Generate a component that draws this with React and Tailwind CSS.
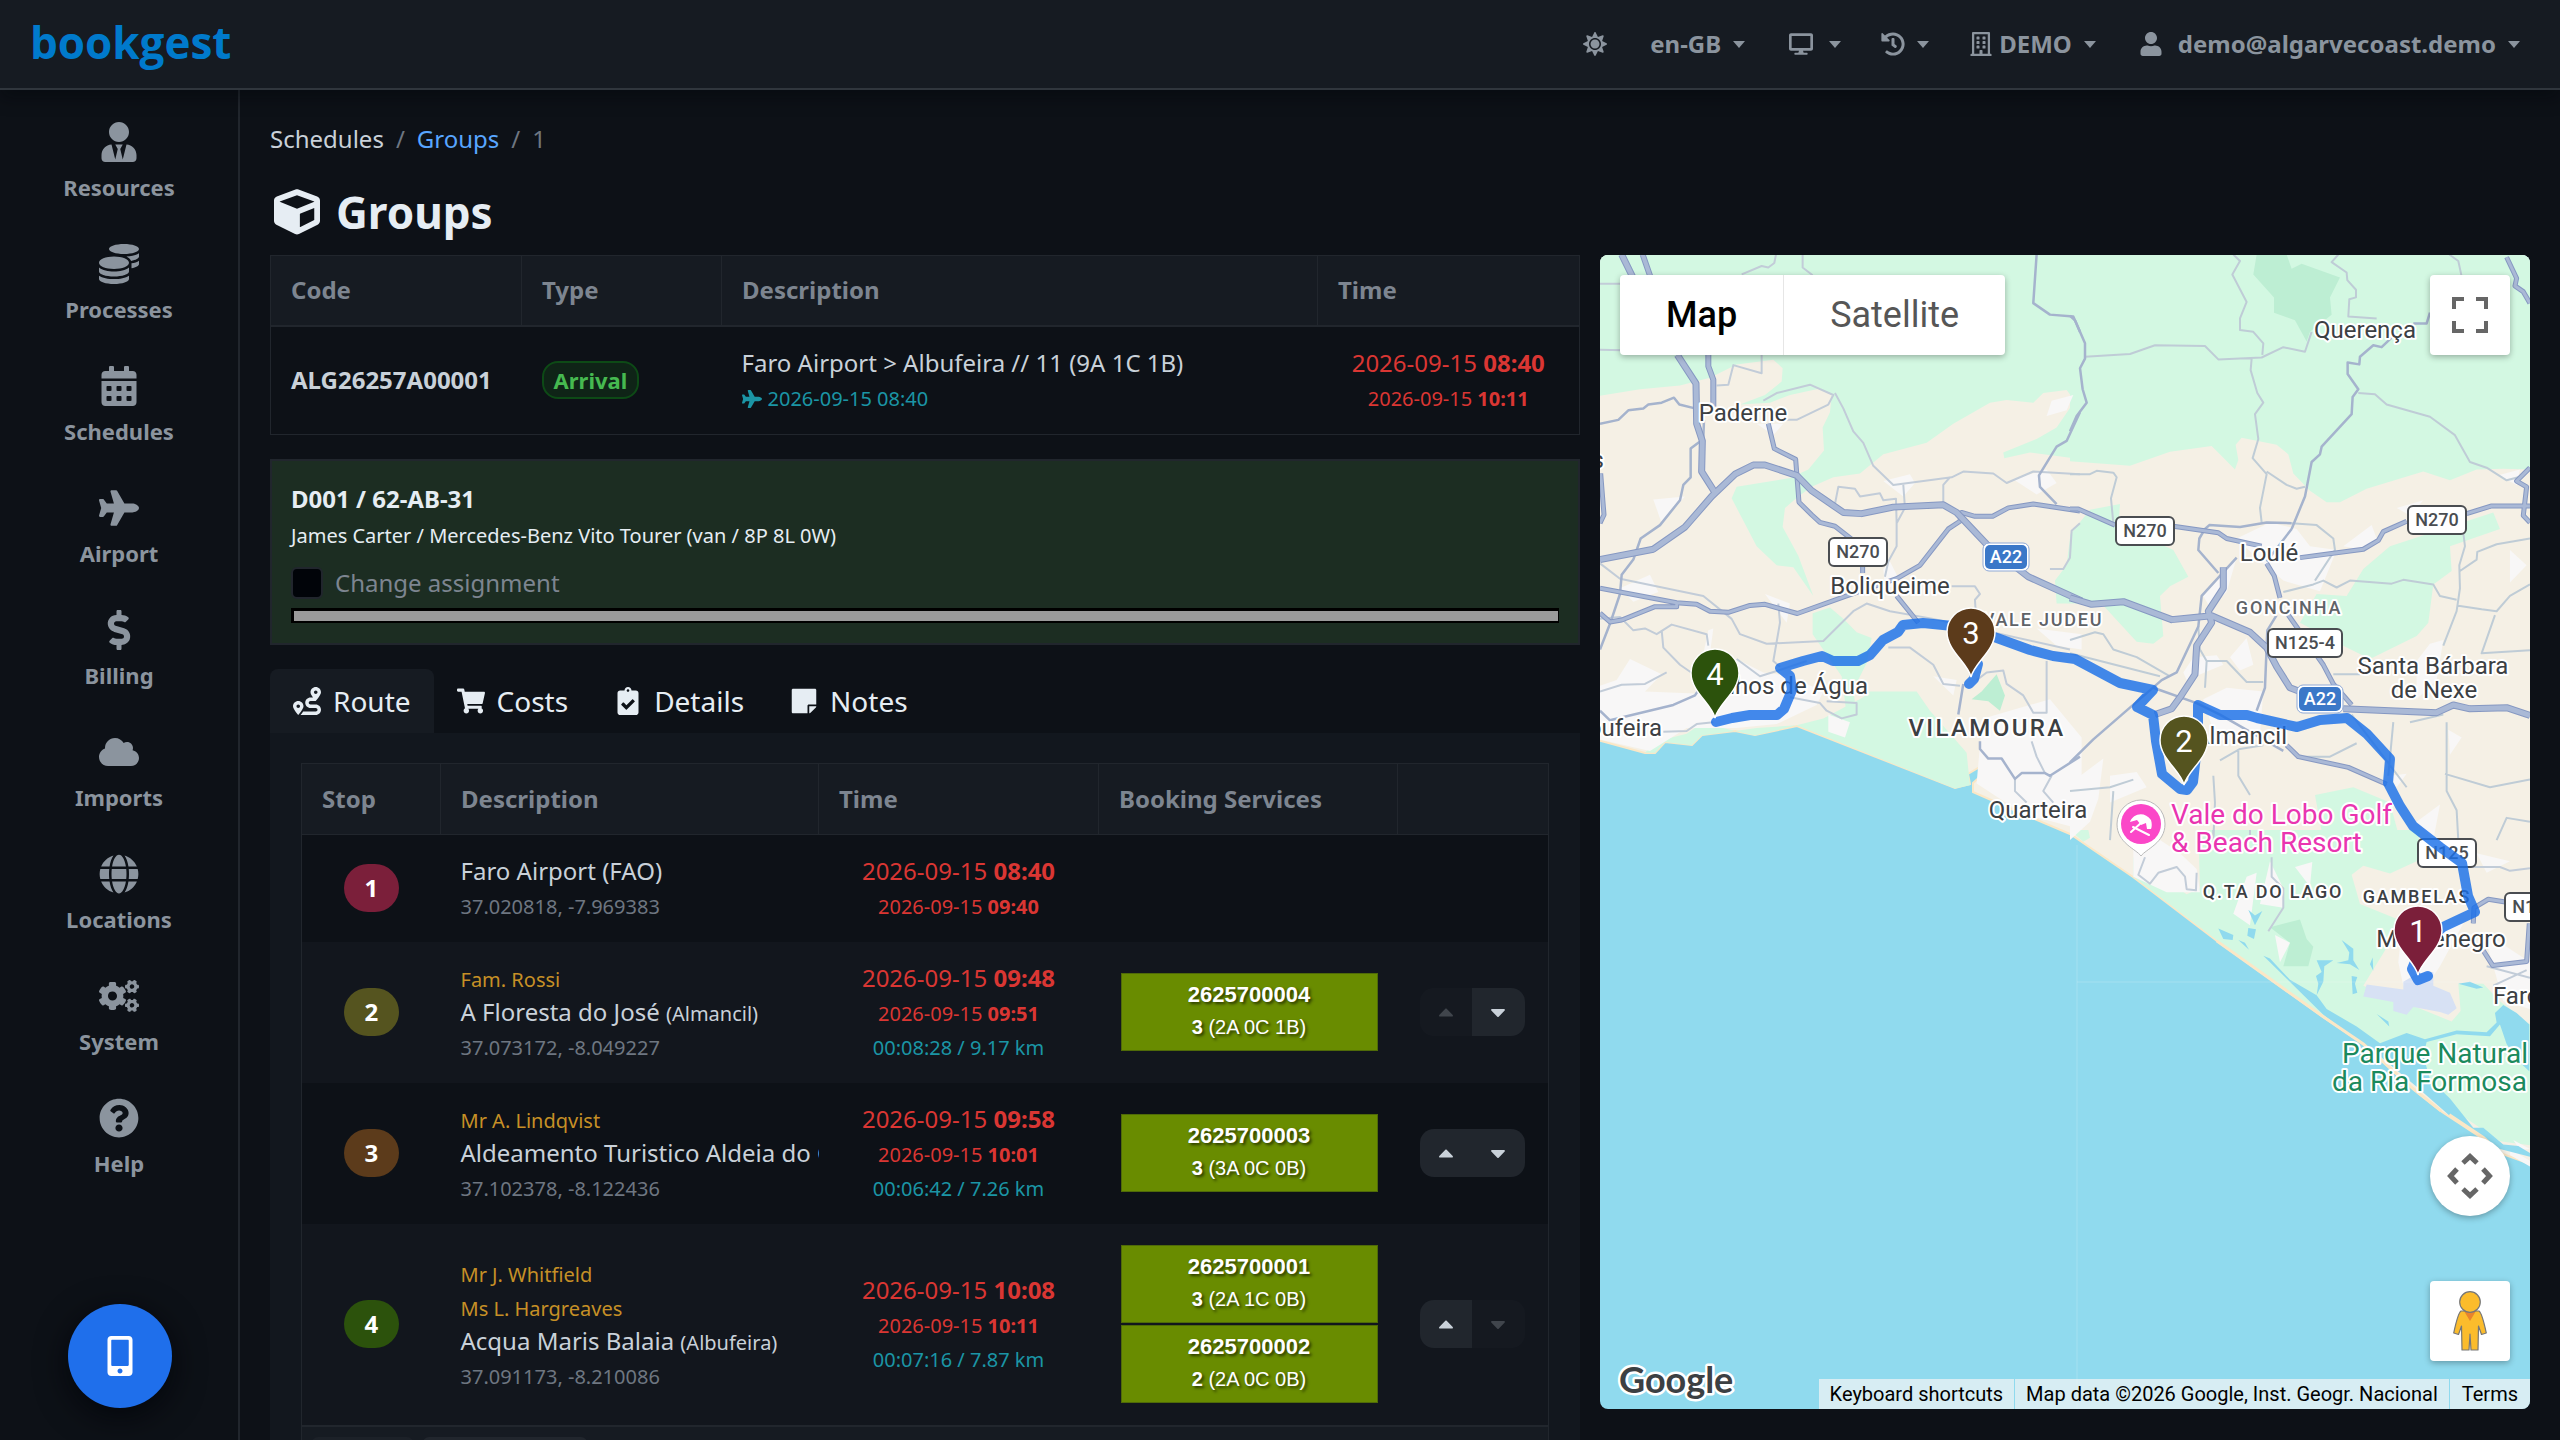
import React from "react";
import {
  FaRegBuilding,
  FaCalendarAlt,
  FaCaretDown,
  FaCaretUp,
  FaClipboardCheck,
  FaCloud,
  FaCogs,
  FaCoins,
  FaCube,
  FaDesktop,
  FaDollarSign,
  FaGlobe,
  FaHistory,
  FaMobileAlt,
  FaPlane,
  FaQuestionCircle,
  FaRoute,
  FaShoppingCart,
  FaStickyNote,
  FaSun,
  FaUser,
  FaUserTie,
} from "react-icons/fa";

const NAV = [
  { label: "Resources", icon: FaUserTie },
  { label: "Processes", icon: FaCoins },
  { label: "Schedules", icon: FaCalendarAlt },
  { label: "Airport", icon: FaPlane },
  { label: "Billing", icon: FaDollarSign },
  { label: "Imports", icon: FaCloud },
  { label: "Locations", icon: FaGlobe },
  { label: "System", icon: FaCogs },
  { label: "Help", icon: FaQuestionCircle },
];

const TABS = [
  { label: "Route", icon: FaRoute, active: true },
  { label: "Costs", icon: FaShoppingCart },
  { label: "Details", icon: FaClipboardCheck },
  { label: "Notes", icon: FaStickyNote },
];

const STOPS = [
  {
    stop: 1,
    badge: "bg-[#7b1f3a]",
    row: "h-[107px] bg-[#0d1117]",
    guests: [],
    name: "Faro Airport (FAO)",
    coords: "37.020818, -7.969383",
    from: "08:40",
    to: "09:40",
    services: [],
  },
  {
    stop: 2,
    badge: "bg-[#55541f]",
    row: "h-[141px] bg-[#12161d]",
    guests: ["Fam. Rossi"],
    name: "A Floresta do José",
    area: "(Almancil)",
    coords: "37.073172, -8.049227",
    from: "09:48",
    to: "09:51",
    leg: "00:08:28 / 9.17 km",
    services: [{ code: "2625700004", pax: "3", split: "(2A 0C 1B)" }],
    down: true,
  },
  {
    stop: 3,
    badge: "bg-[#5c3b1b]",
    row: "h-[141px] bg-[#0d1117]",
    guests: ["Mr A. Lindqvist"],
    name: "Aldeamento Turistico Aldeia do Golfe",
    area: "(Vilamoura)",
    coords: "37.102378, -8.122436",
    from: "09:58",
    to: "10:01",
    leg: "00:06:42 / 7.26 km",
    services: [{ code: "2625700003", pax: "3", split: "(3A 0C 0B)" }],
    up: true,
    down: true,
  },
  {
    stop: 4,
    badge: "bg-[#2c520c]",
    row: "h-[202px] bg-[#12161d]",
    guests: ["Mr J. Whitfield", "Ms L. Hargreaves"],
    name: "Acqua Maris Balaia",
    area: "(Albufeira)",
    coords: "37.091173, -8.210086",
    from: "10:08",
    to: "10:11",
    leg: "00:07:16 / 7.87 km",
    services: [
      { code: "2625700001", pax: "3", split: "(2A 1C 0B)" },
      { code: "2625700002", pax: "2", split: "(2A 0C 0B)" },
    ],
    up: true,
  },
];

function Caret() {
  return <span className="ml-3 border-x-[6px] border-t-[7px] border-x-transparent border-t-current" />;
}

function HeaderButton({ label, children, caret = true }) {
  return (
    <button type="button" aria-label={label} className="flex items-center">
      {children}
      {caret && <Caret />}
    </button>
  );
}

function Header() {
  return (
    <header className="relative z-10 flex h-[90px] shrink-0 items-center justify-between border-b-2 border-[#30363d] bg-[#161b22] pr-10 pl-[30px] shadow-[0_8px_16px_rgba(1,4,9,0.4)]">
      <a href="#" className="pb-1 font-['Open_Sans',sans-serif] text-[44px] leading-none font-bold text-[#007acc]">
        bookgest
      </a>
      <nav className="flex items-center gap-10 font-bold text-[#8b949e]">
        <HeaderButton label="Theme" caret={false}>
          <span className="flex w-[30px] justify-center"><FaSun /></span>
        </HeaderButton>
        <HeaderButton>en-GB</HeaderButton>
        <HeaderButton label="Display">
          <span className="flex w-8 justify-center"><FaDesktop /></span>
        </HeaderButton>
        <HeaderButton label="History"><FaHistory /></HeaderButton>
        <HeaderButton>
          <FaRegBuilding className="mr-1.5" />
          DEMO
        </HeaderButton>
        <HeaderButton>
          <span className="mr-3 flex w-[30px] justify-center"><FaUser /></span>
          demo@algarvecoast.demo
        </HeaderButton>
      </nav>
    </header>
  );
}

function Sidebar() {
  return (
    <aside className="w-60 shrink-0 border-r-2 border-[#21262d]">
      <ul className="flex flex-col gap-[41px] pt-8">
        {NAV.map(({ label, icon: Icon }) => (
          <li key={label}>
            <a href="#" className="flex flex-col items-center gap-[9px] text-[22px] leading-8 font-bold text-[#8b949e]">
              <Icon className="text-[40px]" />
              {label}
            </a>
          </li>
        ))}
      </ul>
      <button
        type="button"
        aria-label="Mobile app"
        className="fixed bottom-8 left-[68px] flex size-[104px] items-center justify-center rounded-full bg-[#1f6feb] text-[40px] text-white shadow-[0_8px_32px_rgba(1,4,9,0.8)]"
      >
        <FaMobileAlt />
      </button>
    </aside>
  );
}

function Times({ from, to, leg }) {
  return (
    <div className="text-center text-[#da3633]">
      2026-09-15 <b>{from}</b>
      <br />
      <small className="text-[20px] leading-none">
        2026-09-15 <b>{to}</b>
      </small>
      {leg && (
        <>
          <br />
          <small className="text-[20px] leading-none text-[#1b95a5]">{leg}</small>
        </>
      )}
    </div>
  );
}

function GroupTable() {
  return (
    <table className="w-full table-fixed border-collapse border border-[#21262d] leading-[34px]">
      <thead className="bg-[#161b22] text-left text-[#7d8590]">
        <tr className="h-[70px] border-b-2 border-[#21262d]">
          <th className="w-[251px] border-r border-[#21262d] px-5">Code</th>
          <th className="w-[200px] border-r border-[#21262d] px-5">Type</th>
          <th className="border-r border-[#21262d] px-5">Description</th>
          <th className="w-[262px] px-5">Time</th>
        </tr>
      </thead>
      <tbody>
        <tr className="h-[109px]">
          <td className="px-5 font-bold">ALG26257A00001</td>
          <td className="px-5">
            <span className="inline-block rounded-2xl border-2 border-[#0d4a16] bg-[#0f2417] px-2.5 text-[22px] font-bold text-[#46b950]">
              Arrival
            </span>
          </td>
          <td className="px-5">
            Faro Airport &gt; Albufeira // 11 (9A 1C 1B)
            <br />
            <small className="text-[20px] leading-none text-[#1b95a5]">
              <FaPlane className="mr-1.5 inline align-[-3px]" />
              2026-09-15 08:40
            </small>
          </td>
          <td>
            <Times from="08:40" to="10:11" />
          </td>
        </tr>
      </tbody>
    </table>
  );
}

function Assignment() {
  return (
    <section className="mt-6 flex flex-col border-2 border-[#21262d] bg-[#1c2d22] px-[19px] pt-5 pb-5 text-[#e6edf3]">
      <strong className="leading-9">D001 / 62-AB-31</strong>
      <span className="text-[20px] leading-[38px]">James Carter / Mercedes-Benz Vito Tourer (van / 8P 8L 0W)</span>
      <label className="mt-2 flex items-center gap-3 leading-10 text-[#7d8590]">
        <input
          type="checkbox"
          className="size-8 appearance-none rounded-md border-2 border-[#21262d] bg-[#010409] checked:bg-[#1f6feb]"
        />
        Change assignment
      </label>
      <hr className="mt-[5px] h-[15px] border-t-3 border-r border-b-2 border-l-3 border-black bg-[#9a9a9a]" />
    </section>
  );
}

function Service({ code, pax, split }) {
  return (
    <div className="border border-[#4f6a08] bg-[#698c00] pt-[5px] pb-[7px] text-center font-['Liberation_Sans',Arial,sans-serif] text-[20px] leading-8 text-white text-shadow-[2px_2px_3px_rgba(0,0,0,0.6)]">
      <b className="block text-[22px]">{code}</b>
      <b>{pax}</b> {split}
    </div>
  );
}

function MoveButtons({ up, down }) {
  return (
    <div className="flex h-12 w-[105px] overflow-hidden rounded-[14px] text-[24px] text-[#c9d1d9]">
      <button type="button" aria-label="Move up" disabled={!up} className="flex flex-1 items-center justify-center bg-[#21262d] disabled:opacity-25">
        <FaCaretUp />
      </button>
      <button type="button" aria-label="Move down" disabled={!down} className="flex flex-1 items-center justify-center bg-[#21262d] disabled:opacity-25">
        <FaCaretDown />
      </button>
    </div>
  );
}

function StopsTable() {
  return (
    <table className="w-full table-fixed border-collapse border border-[#21262d] leading-[34px]">
      <thead className="bg-[#161b22] text-left text-[#7d8590]">
        <tr className="h-[71px] border-b border-[#21262d]">
          <th className="w-[139px] border-r border-[#21262d] px-5">Stop</th>
          <th className="border-r border-[#21262d] px-5">Description</th>
          <th className="w-[280px] border-r border-[#21262d] px-5">Time</th>
          <th className="w-[299px] border-r border-[#21262d] px-5">Booking Services</th>
          <th className="w-[151px]" aria-label="Order" />
        </tr>
      </thead>
      <tbody>
        {STOPS.map((s) => (
          <tr key={s.stop} className={s.row}>
            <td>
              <span className={`mx-auto flex h-12 w-[55px] items-center justify-center rounded-full font-bold text-white ${s.badge}`}>
                {s.stop}
              </span>
            </td>
            <td className="overflow-hidden pl-5 whitespace-nowrap">
              {s.guests.map((guest) => (
                <React.Fragment key={guest}>
                  <small className="text-[20px] leading-none text-[#c69026]">{guest}</small>
                  <br />
                </React.Fragment>
              ))}
              {s.name} {s.area && <small className="text-[20px] leading-none">{s.area}</small>}
              <br />
              <small className="text-[20px] leading-none text-[#6e7681]">{s.coords}</small>
            </td>
            <td>
              <Times from={s.from} to={s.to} leg={s.leg} />
            </td>
            <td className="pr-5 pl-[22px]">
              <div className="flex flex-col gap-0.5">
                {s.services.map((service) => (
                  <Service key={service.code} {...service} />
                ))}
              </div>
            </td>
            <td className="pl-[22px]">{s.stop > 1 && <MoveButtons up={s.up} down={s.down} />}</td>
          </tr>
        ))}
      </tbody>
      <tfoot className="border-t-2 border-[#21262d] bg-[#161b22]">
        <tr>
          <td colSpan={5} className="px-2.5 pt-2.5 pb-5">
            <div className="flex gap-2.5">
              <button type="button" aria-label="Save order" className="h-12 w-[101px] rounded-md bg-[#1c2128]" />
              <button type="button" aria-label="Recalculate" className="h-12 w-[164px] rounded-md bg-[#21262d]" />
            </div>
          </td>
        </tr>
      </tfoot>
    </table>
  );
}

/* ---------- Map ---------- */

const PLACES = [
  { text: "Paderne", x: 143, y: 166 },
  { text: "Boliqueime", x: 290, y: 339 },
  { text: "Olhos de Água", x: 268, y: 439, anchor: "end" },
  { text: "Albufeira", x: 62, y: 481, anchor: "end" },
  { text: "Messines", x: 4, y: 213, anchor: "end" },
  { text: "Quarteira", x: 438, y: 563 },
  { text: "Querença", x: 765, y: 83 },
  { text: "Loulé", x: 669, y: 306 },
  { text: "Santa Bárbara", x: 833, y: 419 },
  { text: "de Nexe", x: 834, y: 443 },
  { text: "Almancil", x: 687, y: 489, anchor: "end" },
  { text: "Montenegro", x: 841, y: 692 },
  { text: "Faro", x: 893, y: 749, anchor: "start" },
];

const DISTRICTS = [
  { text: "VALE JUDEU", x: 443, y: 371, size: 18, fill: "#5f6368" },
  { text: "VILAMOURA", x: 387, y: 481, size: 24, fill: "#3c4043" },
  { text: "GONCINHA", x: 689, y: 359, size: 18, fill: "#5f6368" },
  { text: "Q.TA DO LAGO", x: 673, y: 643, size: 18, fill: "#3c4043" },
  { text: "GAMBELAS", x: 817, y: 648, size: 18, fill: "#3c4043" },
];

const SHIELDS = [
  { text: "N270", x: 258, y: 297, w: 58 },
  { text: "N270", x: 545, y: 276, w: 58 },
  { text: "N270", x: 837, y: 265, w: 58 },
  { text: "N125-4", x: 705, y: 388, w: 74 },
  { text: "N125", x: 847, y: 598, w: 58 },
  { text: "N125", x: 934, y: 652, w: 58 },
  { text: "A22", x: 406, y: 302, w: 42, motorway: true },
  { text: "A22", x: 720, y: 444, w: 42, motorway: true },
];

const PINS = [
  { n: 4, x: 115, y: 463, fill: "#2c520c" },
  { n: 3, x: 371, y: 422, fill: "#5c3b1b" },
  { n: 2, x: 584, y: 530, fill: "#55541f" },
  { n: 1, x: 818, y: 720, fill: "#7b1f3a" },
];

// Each tile is drawn on its own 1470-unit wide grid and placed on the map.
const WEST = "translate(-10 -15) scale(.3333 .3827)";
const EAST = "translate(470 -15) scale(.3333 .3827)";
const SOUTH = "translate(470 575) scale(.3333 .3891)";

const MINOR_WEST =
  "M30 114H100M30 287L200 290M455 90L515 68L535 72L553 60L558 38M638 38V72L668 92M380 380L415 378L430 327L515 348V300M520 420L560 400L660 378L730 405L715 430L620 470H590M735 400L760 440L790 500L820 530L850 590L910 640L1085 620L1120 605L1210 610L1250 635L1330 605L1470 612M745 700L735 690L745 645L795 650L810 670L870 662L880 680L918 676L920 740M940 640L945 700L920 740V800L895 840L885 880M30 845L90 885L340 930L425 990L450 1030L530 1055L700 1048L790 970L830 950L900 970L1030 990L1440 1070M30 990L90 985L130 1020L165 1015L200 1030L245 1005L350 1030L355 1060M215 1020L220 1065L270 1110L320 1140M30 1180L95 1162L165 1160L230 1130M220 1285L290 1283L320 1265L370 1260M565 950L570 1000L550 1100L570 1115M440 1095L510 1140L565 1125L650 1100M895 1065H960L1030 1110L1060 1160L1110 1165M1160 1150L1190 1130L1240 1125L1250 1160L1300 1190L1330 1235H1370V1100M1325 1310L1340 1350L1365 1393M1275 1408V1440L1310 1470M1385 1400L1360 1440L1390 1470M1080 620L1060 640V690M1085 905L1155 905L1170 925L1155 940L1160 1010M1470 740L1445 760L1440 830L1420 860H1380M600 1195L690 1210L710 1230L755 1250L800 1240V1210L710 1205";

const MINOR_EAST =
  "M490 38L510 55L487 90L530 162L510 205V235L550 240L580 270L577 300M45 305L180 298L255 275L405 277L445 312L575 307L640 280L705 292L725 240M545 310L542 340L562 400L580 425L555 455L565 520L548 570L590 612L570 700L575 738M590 605L650 640L680 650L705 645M805 38L785 58L830 85L832 105L858 130V150L838 155L835 200L920 205M1138 38L1165 55L1175 95M865 400L915 403L950 430L1080 462L1155 510L1200 580L1250 595L1310 628L1345 620M0 612H60L80 603L130 608L140 620L123 675L130 740M665 740L740 745L790 780L795 810L735 890M640 920L730 900L760 890L800 908L840 890L965 898L1000 888L1090 900L1110 930L1160 940M1180 765L1185 800L1168 850L1170 910L1160 970L1120 1060M1160 955L1235 965L1280 970L1320 930L1380 900M1170 865L1220 835L1222 815L1280 795L1380 780M1275 980L1235 1080L1380 1072M790 1135H870M0 1045L75 1025L100 1030L130 1070L200 1090L300 1140M0 1080L270 1140M410 1100H470L530 1155H580M385 1010L390 1070L410 1100L405 1170M970 1260L955 1400M845 1240L1010 1430M1130 1260V1440L1160 1490L1165 1568M1020 1260L1120 1240M1125 1395L1260 1430L1380 1410M430 1400L435 1470L430 1568M450 1360L510 1330L580 1320M505 1330V1400L540 1450M0 1440L120 1430L190 1410M120 1568L130 1440M690 1350L780 1350L860 1315M1280 1568L1310 1510L1380 1520";

const MEDIUM_WEST =
  "M535 480L553 545L617 573L627 685L665 718L690 738L735 748L790 785L818 800V870M30 910L260 948L320 952L360 970L415 973L480 955L525 952L622 976L770 930L920 885L990 850L1075 755L1110 735L1115 712L1155 722H1208L1255 700L1330 690L1470 708M30 975L60 998L95 993L195 958H260V945M920 930L985 1000M30 740L42 718L32 610";

const MEDIUM_EAST =
  "M0 703H25L135 745M310 748L445 765L470 780L575 800M690 830L880 808L925 785L940 762L1010 735M1190 715L1265 695H1380M590 845L613 878L630 935M655 980L760 1110L790 1160L845 1215M650 1320L685 1350L835 1378L950 1422M1310 45L1340 100L1335 120L1360 135L1380 165M1380 595L1340 630L1370 645L1360 720L1380 738";

const LOCAL_WEST =
  "M30 480L85 470L115 445L160 440L175 430L215 425L252 412L268 430L315 440M342 470L340 520L302 545V620L280 640L270 680L210 745L152 780L130 835L95 875L90 925L62 998L30 1070M30 1230L60 1255L250 1215L315 1190L360 1130M1340 38L1330 165L1380 195L1450 200L1470 240M1470 450L1430 525L1400 540L1347 615L1350 645L1400 690M1120 1160L1105 1240M1170 1310V1330L1195 1355H1235L1275 1408L1295 1393H1365L1380 1400L1470 1350";

const LOCAL_EAST =
  "M0 198L15 210L45 270V310L30 335L38 390L50 425L20 460L0 500M665 755L705 670L725 580L750 560L755 540L845 455L848 410L865 390L833 350V320L868 325L870 305L910 275L935 280L965 255M1030 218H1070L1080 190M665 755L590 840M445 870L385 810L388 780L405 755L418 745L510 750L590 738L665 740M500 830L395 930L385 1010L320 1130L275 1150L70 1305L0 1365M620 980L592 1020L585 1170L560 1230M250 1170L380 1210L450 1240L640 1335";

const MOTORWAY_WEST =
  "M30 835L190 808L285 750L365 670L435 612L490 588H525L620 615L665 655L760 712L815 715L910 698L1060 692L1100 712L1190 795L1315 880L1475 943M95 38L130 100M262 300L318 375L320 480L337 525L335 605L375 660";

const MOTORWAY_EAST =
  "M0 935L65 952L160 945L305 992L425 982L540 1025L590 1065L620 1115L660 1170L690 1180M820 1225L1100 1235L1150 1215L1200 1225L1310 1222L1380 1242M460 855V910L415 970L425 1000L380 1060L375 1135L330 1195L305 1225L255 1240";

function Road({ d, transform, width, casing, fill }) {
  return (
    <g transform={transform} fill="none" strokeLinejoin="round">
      {casing && <path d={d} stroke={casing} strokeWidth={width + 2} vectorEffect="non-scaling-stroke" />}
      <path d={d} stroke={fill} strokeWidth={width} vectorEffect="non-scaling-stroke" />
    </g>
  );
}

function MapDrawing() {
  return (
    <svg
      viewBox="0 0 930 1154"
      preserveAspectRatio="xMidYMid slice"
      className="absolute inset-0 size-full font-[Roboto,sans-serif]"
      role="img"
      aria-label="Route map"
    >
      <rect width="930" height="1154" fill="#90daee" />
      <path
        fill="#f5f0e5"
        stroke="#fbe7c6"
        strokeWidth="2"
        d="M-3 -3H933V910L900 898L880 882L842 857L813 834L763 789L723 762L617 686L533 622L470 579L423 559L373 537V528L383 519L378 513L368 519L370 529L355 533L197 471L155 480L135 476L102 480L92 490L65 487L55 498H45L-3 485Z"
      />

      {/* Parks and hills */}
      <g fill="#d3f8e2">
        <g transform={WEST}>
          <path d="M30 30H1475V573L1320 555L1243 570L1240 555L1340 520L1400 490L1455 420L1430 392L1360 400L1330 425L1250 418L1200 425L1090 480L1010 530L880 560L810 610L730 620L665 645L625 670L585 700L578 750L625 825L670 930L610 855L560 850L500 800L425 675L440 645L600 622L655 600L702 550L698 490L720 450L725 405L690 388L600 405L540 425L450 430L525 405L575 370L578 335L550 313L440 325L360 360L270 380L150 390L30 407Z" />
          <path d="M668 975L720 960L760 990L800 1025L845 1040L830 1105L790 1175L800 1240L770 1240L755 1140L668 1030Z" />
          <path d="M620 1268L700 1250L820 1195L840 1180H980L1020 1230L1130 1340L1140 1425L1095 1433Z" />
          <path d="M1475 740L1440 780L1430 850L1395 890L1400 950H1475ZM165 1340L200 1310L290 1290L320 1272L400 1275L435 1283L335 1295L305 1320L225 1312L195 1340ZM435 1283L500 1275L620 1268L495 1295Z" />
        </g>
        <g transform={EAST}>
          <path d="M0 30H1390V600L1300 598L1220 600L1140 628L1060 605L890 650L810 685H770L720 655L670 610L655 560L620 535L515 517L497 535L505 575L495 600L425 538L300 553L180 590L0 578Z" />
          <path d="M0 770L60 705L150 690L145 745L310 810L355 880L300 905L270 930L280 1035L250 1055L200 1050L100 955L0 930Z" />
          <path d="M740 925L830 930L880 860L960 800L1270 712L1290 755L1140 800L1145 865L1090 900L1075 1000L1040 1035L900 1095L820 1060L690 1000Z" />
          <path d="M735 1450L850 1430L960 1470L990 1568H760Z" />
        </g>
        <path
          transform={SOUTH}
          d="M190 120V70L350 165L390 150L385 0H1050L1040 80L960 112L880 92L845 115L870 190L985 230L945 310L880 400L1145 492L1172 465L1165 395L1240 395L1290 440L1380 500V810L1290 800L1100 690L1050 610L880 548L760 478L440 283Z"
        />
        <path transform={SOUTH} d="M0 0H55L60 20L40 30Z" />
      </g>
      <g fill="#bdeed3">
        <path transform={EAST} d="M560 38H650L665 75L695 62L810 98L780 150L785 195L720 240L710 265L675 210L612 190V150L550 90Z" />
        <path transform={WEST} d="M1145 1200L1175 1180L1220 1135L1245 1190L1230 1230L1195 1205Z" />
        <path transform={SOUTH} d="M600 250L690 230L710 280L730 300L715 350L640 350L660 290Z" />
      </g>

      {/* Built-up areas */}
      <g fill="#f8f7f7">
        <path
          transform={WEST}
          d="M30 1165L80 1150L120 1095L215 1135L165 1180L315 1185L355 1020L370 1015L360 1080L440 1095L520 1130L600 1140L700 1180L680 1215L560 1265L440 1275L290 1275L180 1335L30 1305ZM190 678L285 670L215 740ZM880 630L960 612L975 635L940 670ZM1270 625L1370 600L1400 635L1340 665ZM1370 460L1385 420L1450 405L1430 445ZM525 925L600 950L590 1000ZM90 910L180 875L205 920L130 945ZM715 1240L780 1260L765 1300L715 1285ZM1030 1140L1100 1150L1090 1190ZM1180 1250L1380 1200L1475 1300V1540L1300 1500L1160 1420L1170 1320ZM1340 1015L1475 1030V1070L1400 1060ZM880 860L900 840L935 900L885 910ZM500 480H580L550 510Z"
        />
        <path
          transform={EAST}
          d="M500 780L600 738L680 755L720 800L800 810L750 918L640 890L560 830ZM820 800L905 745L920 780L880 810ZM400 930L500 830L470 920L420 960ZM480 1090L530 1040L550 1110L510 1125ZM470 1170L580 1180L570 1290L440 1310L400 1200ZM1040 1100L1080 1055L1120 1045L1100 1150L1040 1200ZM980 700L1060 680L1020 720ZM1285 615L1350 600L1340 640ZM1320 810L1370 850L1320 895ZM1135 1280L1175 1300L1140 1345ZM0 1420L100 1355L85 1460L60 1520L0 1568ZM120 1400L200 1390L230 1430L120 1470ZM340 1130L370 1090L440 1085L460 1110L350 1150ZM960 1400L1010 1395L980 1430ZM1040 1520L1110 1475L1090 1568Z"
        />
        <path
          transform={SOUTH}
          d="M190 120V50L260 20L330 60L380 100L390 160H290ZM490 215L530 120L560 110L540 245ZM570 190L600 80L640 150L640 200ZM675 95L727 82L720 145ZM615 270L660 290L630 340ZM1220 60L1320 80L1250 110ZM990 300L1060 250L1180 240L1110 350L1090 375L1000 400L985 340ZM1240 260L1380 340V460L1300 440L1270 350ZM1320 820L1380 850V865L1320 835ZM1330 797L1380 820L1350 822Z"
        />
      </g>
      <path transform={SOUTH} fill="#d7e1f4" d="M890 397L1000 410V390L1040 370L1090 365V400L1140 418L1160 458L1135 475L1110 468L1030 455L1010 475L970 465V442L880 428Z" />

      {/* Lagoons and channels */}
      <g transform={SOUTH} fill="#90daee">
        <path d="M445 253L490 270L488 283L460 280ZM535 205L555 220L577 208L555 245ZM535 252L558 255L552 280L532 272ZM505 283L525 290L537 308ZM580 323L600 330L660 385L740 425L770 460L860 505L930 548L1010 522L1065 538L1160 515L1250 520L1280 495L1275 470L1300 450L1340 470L1378 500V620L1340 590L1310 550L1290 500L1260 530L1160 525L1070 545L1060 580L1080 640L1140 690L1210 765L1240 765L1300 808L1345 812L1380 830V840L1290 820L1140 735L1040 660L900 560L830 520L760 475ZM740 335L790 335L763 350L760 390L740 425L745 395L738 375L755 365ZM815 283L850 305L850 335L868 360L840 345L800 342L835 335L838 315ZM845 375L862 378L855 395L862 418L848 422ZM908 328L910 362L900 345ZM920 473L955 492L958 505ZM1165 395L1200 390L1240 405L1220 408Z" />
      </g>
      <path transform={SOUTH} fill="none" stroke="#fbe7c6" strokeWidth="3" vectorEffect="non-scaling-stroke" d="M440 285L760 480L880 550L1030 665L1113 722M1138 732L1240 790L1290 830" />
      <path d="M477 590V1154M477 727H930" stroke="#fff" strokeOpacity=".18" />

      {/* Road network */}
      <Road transform={WEST} d={MINOR_WEST} width={2} fill="#c2ccd8" />
      <Road transform={EAST} d={MINOR_EAST} width={2} fill="#bfccd6" />
      <Road transform={SOUTH} d="M225 70L205 115L240 138L265 110L320 95L345 120L350 152L378 155L380 110M605 70V120L640 150V200L595 260M1190 95H1290L1320 105L1380 98M1250 350L1380 380M1270 400L1370 360M540 0V20M430 0V15" width={2} fill="#c2ccd8" />
      <Road transform={WEST} d={LOCAL_WEST} width={2.5} fill="#a5b3cd" />
      <Road transform={EAST} d={LOCAL_EAST} width={2.5} fill="#a5b3cd" />
      <Road transform={WEST} d={MEDIUM_WEST} width={3} casing="#8698c2" fill="#aab9d6" />
      <Road transform={EAST} d={MEDIUM_EAST} width={3} casing="#8698c2" fill="#aab9d6" />
      <Road transform={SOUTH} d="M1210 240L1212 200L1255 178L1320 187M1240 310L1268 348L1370 338L1378 240" width={3} casing="#8698c2" fill="#aab9d6" />
      <Road transform={WEST} d="M158 38L182 98M355 300V330L370 365V435" width={4} casing="#8698c2" fill="#aab9d6" />
      <Road transform={WEST} d={MOTORWAY_WEST} width={5} casing="#8698c2" fill="#aab9d6" />
      <Road transform={EAST} d={MOTORWAY_EAST} width={5} casing="#8698c2" fill="#aab9d6" />

      {/* Place names */}
      <g stroke="#fff" strokeWidth="4" strokeLinejoin="round" paintOrder="stroke" fill="#3c4043">
        <g fontSize="24">
          {PLACES.map((p) => (
            <text key={p.text} x={p.x} y={p.y} textAnchor={p.anchor || "middle"}>{p.text}</text>
          ))}
        </g>
        {DISTRICTS.map((p) => (
          <text key={p.text} x={p.x} y={p.y} textAnchor="middle" fontSize={p.size} fontWeight="500" fill={p.fill} className="tracking-widest">
            {p.text}
          </text>
        ))}
        <g fontSize="28" fill="#e935b0">
          <text x="571" y="569">Vale do Lobo Golf</text>
          <text x="571" y="597">&amp; Beach Resort</text>
        </g>
        <g fontSize="28" fill="#1b8a5d" textAnchor="end">
          <text x="928" y="808">Parque Natural</text>
          <text x="927" y="836">da Ria Formosa</text>
        </g>
      </g>

      {SHIELDS.map((s) => (
        <g key={s.text + s.x} transform={`translate(${s.x} ${s.y})`}>
          {s.motorway && <rect x={-s.w / 2 - 2} y="-14" width={s.w + 4} height="28" rx="6" fill="#fff" stroke="#8fa9d6" />}
          <rect
            x={-s.w / 2}
            y={s.motorway ? -12 : -14}
            width={s.w}
            height={s.motorway ? 24 : 28}
            rx="5"
            fill={s.motorway ? "#3b78c8" : "#fff"}
            stroke={s.motorway ? "none" : "#4a4d51"}
            strokeWidth="2"
          />
          <text y="6" textAnchor="middle" fontSize="18" fontWeight="500" fill={s.motorway ? "#fff" : "#4a4d51"}>{s.text}</text>
        </g>
      ))}

      {/* Beach resort marker */}
      <path d="M541 601C536 594 517 588 517 569A24 24 0 0 1 565 569C565 588 546 594 541 601Z" fill="#fff" stroke="#b9b9b9" />
      <circle cx="541" cy="569" r="20" fill="#fb47c8" />
      <g transform="translate(541 569)" fill="#fff" stroke="#fff" strokeWidth="2" strokeLinecap="round">
        <path d="M-11 -2C-8 -11 4 -13 10 -4C11 -1 11 3 10 5L6 5L5 -1L0 1L-4 -4Z" strokeWidth="0" />
        <path d="M1 -2L-10 8M-8 3L8 11" fill="none" />
      </g>

      {/* Driven route */}
      <g fill="none" stroke="#1a6fe8" strokeOpacity=".82" strokeWidth="10" strokeLinejoin="round" strokeLinecap="round">
        <path d="M116 467L132 463L150 460H177L184 454L192 435L190 421L180 413L203 406L222 401L233 406H258L270 400L283 385L298 377L303 370L323 368L363 372L397 383L430 395L453 401L475 404L490 412L520 428L553 435L537 452L553 460L556 486L562 519L580 534L587 535L593 527L598 483V450L620 460H647L657 463L697 472L720 465L747 463L767 479L790 504L788 528L800 551L813 571L840 592L862 608L868 641L875 657L843 672L822 690L812 714L818 725L828 721" />
        <path d="M378 409L374 424L369 429" />
      </g>

      {PINS.map((p) => (
        <g key={p.n} transform={`translate(${p.x} ${p.y})`}>
          <path d="M0 0C-3 -14 -24 -26 -24 -45A24 24 0 0 1 24 -45C24 -26 3 -14 0 0Z" fill={p.fill} stroke="#fff" strokeWidth="1.5" />
          <text y="-33" textAnchor="middle" fontSize="31" fill="#fff">{p.n}</text>
        </g>
      ))}

      <text x="19" y="1138" fontSize="36" fontWeight="700" fill="#3c4043" stroke="#fff" strokeWidth="5" strokeLinejoin="round" paintOrder="stroke" className="font-[Lato,sans-serif]">
        Google
      </text>
    </svg>
  );
}

function Pegman() {
  return (
    <svg viewBox="0 0 34 60" className="h-[60px] w-[34px]" fill="#fbbc2c" stroke="#777" strokeWidth="1.2" strokeLinejoin="round">
      <path d="M8 20L26 20C29 22 32 36 33.300 42L28.500 43.500L25.500 35L25 59H18L17 43L16 59H9L8.500 35L5.500 43.500L.7 42C2 36 5 22 8 20Z" />
      <path d="M11 20H23L17 30Z" fill="#e8832c" stroke="none" />
      <circle cx="17" cy="11" r="10.300" />
    </svg>
  );
}

function MapPanel() {
  return (
    <section className="relative h-[calc(100vh-286px)] overflow-hidden rounded-lg font-[Roboto,sans-serif]">
      <MapDrawing />
      <div className="absolute top-5 left-5 flex rounded-sm bg-white text-[36px] shadow-[0_2px_6px_rgba(0,0,0,0.3)]">
        <button type="button" className="h-20 border-r border-[#e6e6e6] px-[46px] font-medium text-black">Map</button>
        <button type="button" className="h-20 px-[46px] text-[#565656]">Satellite</button>
      </div>
      <button type="button" aria-label="Toggle fullscreen" className="absolute top-5 right-5 flex size-20 items-center justify-center rounded-sm bg-white shadow-[0_2px_6px_rgba(0,0,0,0.3)]">
        <svg viewBox="0 0 18 18" className="size-9" fill="#666">
          <path d="M0 0v6h2V2h4V0H0zm16 0h-4v2h4v4h2V0h-2zm0 16h-4v2h6v-6h-2v4zM2 12H0v6h6v-2H2v-4z" />
        </svg>
      </button>
      <button type="button" aria-label="Map camera controls" className="absolute right-5 bottom-[193px] flex size-20 items-center justify-center rounded-full bg-white shadow-[0_2px_6px_rgba(0,0,0,0.3)]">
        <svg viewBox="0 0 46 46" className="size-[46px]" fill="none" stroke="#666" strokeWidth="5">
          <path d="M16 10L23 3.500L30 10M16 36L23 42.500L30 36M10 16L3.500 23L10 30M36 16L42.500 23L36 30" />
        </svg>
      </button>
      <button type="button" aria-label="Street View Pegman" className="absolute right-5 bottom-12 flex size-20 items-center justify-center rounded-sm bg-white shadow-[0_2px_6px_rgba(0,0,0,0.3)]">
        <Pegman />
      </button>
      <div className="absolute right-0 bottom-0 flex gap-px text-[20px] leading-[30px] text-black">
        <button type="button" className="bg-[#f5f5f5]/70 px-[11px]">Keyboard shortcuts</button>
        <span className="bg-[#f5f5f5]/70 px-[11px]">Map data ©2026 Google, Inst. Geogr. Nacional</span>
        <a href="#" className="bg-[#f5f5f5]/70 px-3">Terms</a>
      </div>
    </section>
  );
}

export default function App() {
  return (
    <div className="flex h-screen flex-col overflow-hidden bg-[#0d1117] font-['Noto_Sans',sans-serif] text-[24px] text-[#c9d1d9]">
      <Header />
      <div className="flex min-h-0 flex-1">
        <Sidebar />
        <main className="min-w-0 flex-1 overflow-y-auto px-[30px] pt-[31px] [scrollbar-width:none]">
          <ol className="flex gap-3 leading-9">
            <li>Schedules</li>
            <li className="text-[#6e7681]">/</li>
            <li><a href="#" className="text-[#58a6ff]">Groups</a></li>
            <li className="text-[#6e7681]">/</li>
            <li className="text-[#6e7681]">1</li>
          </ol>
          <h1 className="mt-[23px] mb-[11px] flex h-16 items-center gap-4 pl-1 text-[44px] font-bold text-[#e6edf3]">
            <FaCube className="text-[46px]" />
            Groups
          </h1>
          <div className="grid grid-cols-12 gap-5">
            <div className="col-span-7">
              <GroupTable />
              <Assignment />
              <div className="mt-6 flex" role="tablist">
                {TABS.map(({ label, icon: Icon, active }) => (
                  <button
                    key={label}
                    type="button"
                    role="tab"
                    aria-selected={!!active}
                    className="flex h-16 items-center gap-3 rounded-t-lg px-[23px] text-[28px] text-[#e6edf3] aria-selected:bg-[#161b22]"
                  >
                    <Icon />
                    {label}
                  </button>
                ))}
              </div>
              <div className="bg-[#12171e] px-[31px] py-[30px]">
                <StopsTable />
              </div>
            </div>
            <div className="col-span-5">
              <MapPanel />
            </div>
          </div>
        </main>
      </div>
    </div>
  );
}
